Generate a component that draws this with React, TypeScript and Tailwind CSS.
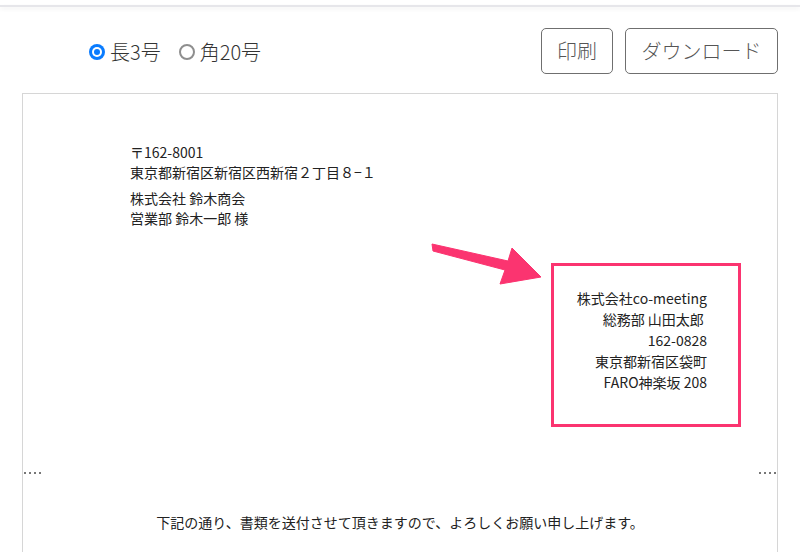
import React from "react";

const font = { fontFamily: '"Noto Sans CJK JP", "Noto Sans", sans-serif' };

function Radio({ checked, label }: { checked: boolean; label: string }) {
  return (
    <label className="flex items-center gap-[5px] cursor-pointer">
      {checked ? (
        <span className="flex items-center justify-center w-[16px] h-[16px] rounded-full bg-[#0a7cff]">
          <span className="w-[10px] h-[10px] rounded-full bg-white flex items-center justify-center">
            <span className="w-[6px] h-[6px] rounded-full bg-[#0a7cff]" />
          </span>
        </span>
      ) : (
        <span className="w-[16px] h-[16px] rounded-full border-[2.5px] border-[#8e8e8e]" />
      )}
      <span className="text-[20px] leading-[26px] font-light text-[#333]">{label}</span>
    </label>
  );
}

function FoldMark() {
  return (
    <div className="flex gap-[3px]">
      <span className="w-[2px] h-[2px] bg-[#777]" />
      <span className="w-[2px] h-[2px] bg-[#777]" />
      <span className="w-[2px] h-[2px] bg-[#777]" />
      <span className="w-[2px] h-[2px] bg-[#777]" />
    </div>
  );
}

export default function App() {
  return (
    <div className="relative h-[552px] overflow-hidden bg-white" style={font}>
      {/* top shadow line */}
      <div className="h-[5px] bg-white" />
      <div className="h-[2px] bg-[#e6e6ea] shadow-[0_2px_4px_rgba(0,0,0,0.07)]" />

      <div className="px-[22px] pt-[21px]">
        {/* toolbar */}
        <div className="flex items-center justify-between h-[46px]">
          <div className="flex items-center gap-[18px] pl-[67px] pt-[2px]">
            <Radio checked label="長3号" />
            <Radio checked={false} label="角20号" />
          </div>
          <div className="flex gap-[12px]">
            <button className="h-[46px] w-[72px] rounded-[5px] border border-[#6f6f6f] text-[20px] font-light text-[#555] bg-white">
              印刷
            </button>
            <button className="h-[46px] w-[153px] rounded-[5px] border border-[#6f6f6f] text-[20px] font-light text-[#555] bg-white">
              ダウンロード
            </button>
          </div>
        </div>

        {/* envelope paper */}
        <div className="mt-[19px] border border-[#d6d6d6] pb-[40px]">
          <div className="pt-[48px] pl-[107px] text-[14px] leading-[20px] text-[#222]">
            <div>〒162-8001</div>
            <div>東京都新宿区新宿区西新宿２丁目８−１</div>
            <div className="mt-[6px]">株式会社 鈴木商会</div>
            <div>営業部 鈴木一郎 様</div>
          </div>

          <div className="flex justify-end pr-[36px] mt-[35px]">
            <div className="w-[190px] h-[164px] border-[3px] border-[#fb3470] pt-[22px] pr-[31px] text-right text-[14px] leading-[21px] text-[#222]">
              <div>株式会社co-meeting</div>
              <div>総務部 山田太郎&nbsp;</div>
              <div>162-0828</div>
              <div>東京都新宿区袋町</div>
              <div>FARO神楽坂 208</div>
            </div>
          </div>

          <div className="flex justify-between mt-[45px] px-[1px]">
            <FoldMark />
            <FoldMark />
          </div>

          <p className="mt-[38px] text-center text-[14px] leading-[20px] text-[#222]">
            下記の通り、書類を送付させて頂きますので、よろしくお願い申し上げます。
          </p>
        </div>
      </div>

      {/* pointer arrow */}
      <svg className="absolute left-0 top-0 pointer-events-none" width="800" height="552">
        <polygon
          points="432,244 508,261 512,248 541,277 500,284 505,270 433,251"
          fill="#fb3470"
          stroke="#fb3470"
          strokeLinejoin="round"
          strokeWidth="1"
        />
      </svg>
    </div>
  );
}
